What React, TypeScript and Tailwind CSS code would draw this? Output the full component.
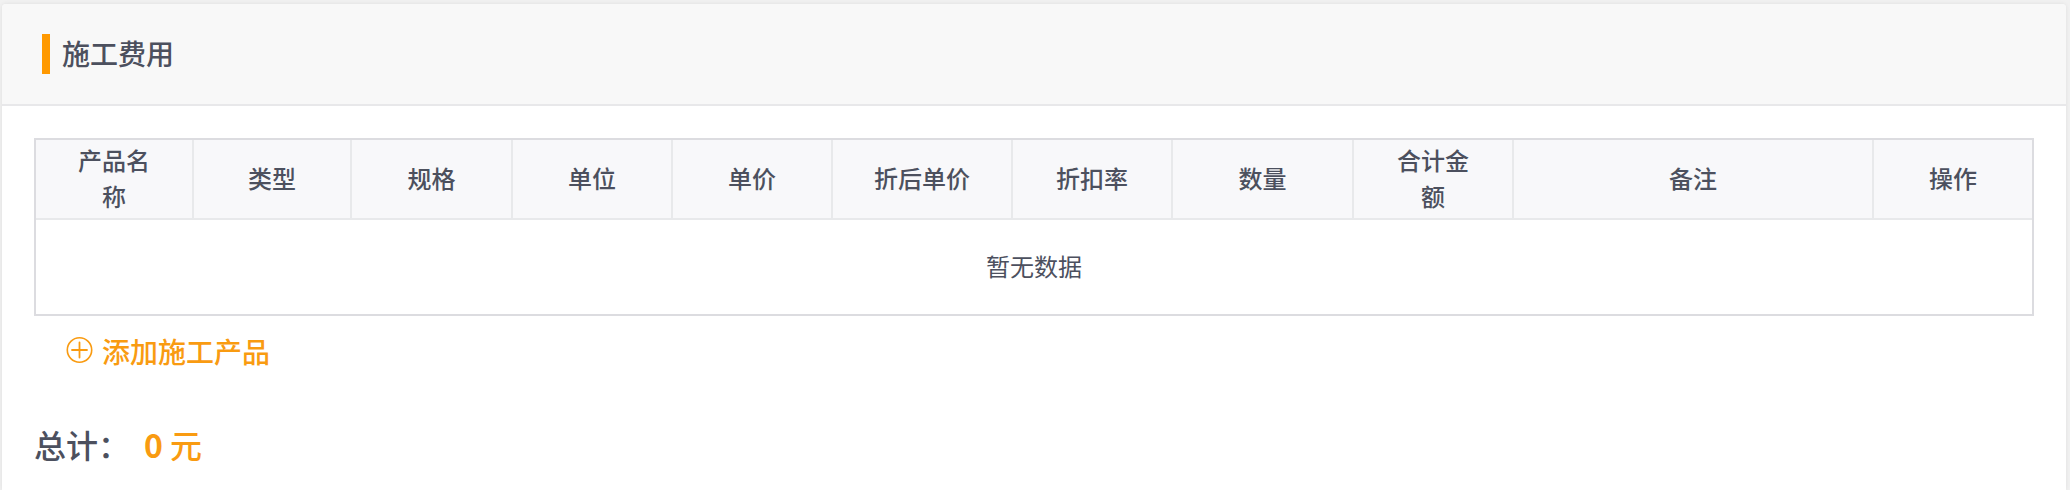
const columns = [
  { title: "产品名称", width: "w-[158px]" },
  { title: "类型", width: "w-[158px]" },
  { title: "规格", width: "w-[161px]" },
  { title: "单位", width: "w-[160px]" },
  { title: "单价", width: "w-[160px]" },
  { title: "折后单价", width: "w-[180px]" },
  { title: "折扣率", width: "w-[160px]" },
  { title: "数量", width: "w-[181px]" },
  { title: "合计金额", width: "w-[160px]" },
  { title: "备注", width: "w-auto" },
  { title: "操作", width: "w-[158px]" },
];

function PlusCircle() {
  return (
    <svg viewBox="0 0 28 28" className="size-7" fill="none" stroke="currentColor" aria-hidden="true">
      <circle cx="13.5" cy="13" r="12.2" strokeWidth="1.6" />
      <path d="M6 13h15M13.5 5.5v15" strokeWidth="1.8" strokeLinecap="round" />
    </svg>
  );
}

export default function App() {
  return (
    <div className="min-h-screen bg-[#f1f1f1] pt-1 pr-1 pl-0.5 font-['Noto_Sans_CJK_SC',sans-serif] text-[#4c505e]">
      <section className="min-h-[486px] rounded-t bg-white shadow-[0_0_4px_rgba(0,0,0,0.08)]">
        <header className="flex h-[102px] items-center gap-3 rounded-t border-b-2 border-[#e8e8ea] bg-[#f8f8f8] px-10">
          <span className="h-10 w-2 bg-[#ff9900]" />
          <h2 className="pb-0.5 text-[28px] leading-10 font-medium">施工费用</h2>
        </header>

        <div className="px-8 pt-8">
          <div className="border-2 border-[#dcdce0]">
            <table className="w-full table-fixed border-separate border-spacing-0 text-center text-2xl">
              <thead>
                <tr className="h-20 bg-[#f8f8fa]">
                  {columns.map((c) => (
                    <th
                      key={c.title}
                      scope="col"
                      className={`${c.width} border-r-2 border-b-2 border-[#e8e9eb] px-9 pt-0 pb-0.5 leading-9 font-medium last:border-r-0`}
                    >
                      {c.title}
                    </th>
                  ))}
                </tr>
              </thead>
              <tbody>
                <tr className="h-[94px]">
                  <td colSpan={columns.length} className="pb-0.5 font-normal">暂无数据</td>
                </tr>
              </tbody>
            </table>
          </div>

          <button type="button" className="mt-[15px] ml-8 flex items-center gap-2 text-[28px] leading-10 font-medium text-[#f99b11]">
            <PlusCircle />
            添加施工产品
          </button>

          <p className="mt-[49px] flex gap-3.5 text-[32px] leading-12 font-medium">
            <span>总计：</span>
            <strong className="font-medium text-[#f99b11]">
              <span className="font-bold">0</span> 元
            </strong>
          </p>
        </div>
      </section>
    </div>
  );
}
